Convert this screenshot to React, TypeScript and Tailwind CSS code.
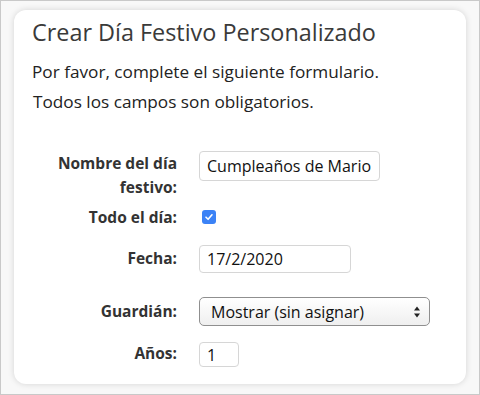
import React from "react";

export default function App() {
  const font = { fontFamily: '"Open Sans", "Noto Sans", sans-serif' };
  return (
    <div
      className="w-[480px] h-[395px] border border-[#c9c9c9] bg-[#f8f8f8] box-border pt-[9px] pl-[13px]"
      style={font}
    >
      <div className="w-[452px] h-[374px] bg-white rounded-[12px] shadow-[0_0_6px_rgba(0,0,0,0.15)] pl-[18px] pt-[7px] text-[#333]">
        <h1 className="text-[23.4px] leading-[30px] text-[#3a3a3a]">Crear Día Festivo Personalizado</h1>
        <p className="mt-[10px] text-[17.2px] leading-[30px] text-[#222]">
          Por favor, complete el siguiente formulario.
        </p>
        <p className="text-[17.2px] leading-[30px] text-[#222] pl-[1px]">Todos los campos son obligatorios.</p>

        <div className="mt-[34px] flex flex-col">
          <div className="flex items-start">
            <div className="w-[145px] text-right font-bold text-[15.5px] leading-[24px] pl-[24px]">
              Nombre del día festivo:
            </div>
            <input
              readOnly
              value="Cumpleaños de Mario"
              className="ml-[22px] mt-[0px] w-[181px] h-[30px] border border-[#d6d6d6] rounded-[4px] px-[7px] text-[16px] text-[#111] outline-none"
              style={font}
            />
          </div>
          <div className="flex items-start mt-[6px]">
            <div className="w-[145px] text-right font-bold text-[15.5px] leading-[24px]">Todo el día:</div>
            <div className="ml-[25px] mt-[5px] w-[14px] h-[14px] rounded-[3px] bg-[#3b82f6] flex items-center justify-center">
              <svg width="10" height="10" viewBox="0 0 10 10">
                <path d="M2 5.2 L4.1 7.3 L8 2.8" stroke="white" strokeWidth="1.6" fill="none" strokeLinecap="round" strokeLinejoin="round" />
              </svg>
            </div>
          </div>
          <div className="flex items-start mt-[16px]">
            <div className="w-[145px] text-right font-bold text-[15.5px] leading-[24px] mt-[1px]">Fecha:</div>
            <input
              readOnly
              value="17/2/2020"
              className="ml-[22px] w-[152px] h-[28px] border border-[#d6d6d6] rounded-[4px] px-[7px] text-[16px] text-[#111] outline-none"
              style={font}
            />
          </div>
          <div className="flex items-start mt-[24px]">
            <div className="w-[145px] text-right font-bold text-[15.5px] leading-[24px] mt-[2px]">Guardián:</div>
            <div className="ml-[22px] w-[231px] h-[29px] border border-[#8f8f8f] rounded-[5px] bg-gradient-to-b from-white to-[#efefef] flex items-center pl-[11px] pr-[8px] text-[16px] text-[#111]">
              <span className="flex-1">Mostrar (sin asignar)</span>
              <svg width="8" height="14" viewBox="0 0 8 14">
                <path d="M4 1.5 L7 5.5 L1 5.5 Z" fill="#222" />
                <path d="M4 12.5 L7 8.5 L1 8.5 Z" fill="#222" />
              </svg>
            </div>
          </div>
          <div className="flex items-start mt-[16px]">
            <div className="w-[145px] text-right font-bold text-[15.5px] leading-[24px] mt-[-1px]">Años:</div>
            <input
              readOnly
              value="1"
              className="ml-[22px] w-[40px] h-[25px] border border-[#d6d6d6] rounded-[4px] px-[7px] text-[16px] text-[#111] outline-none"
              style={font}
            />
          </div>
        </div>
      </div>
    </div>
  );
}
